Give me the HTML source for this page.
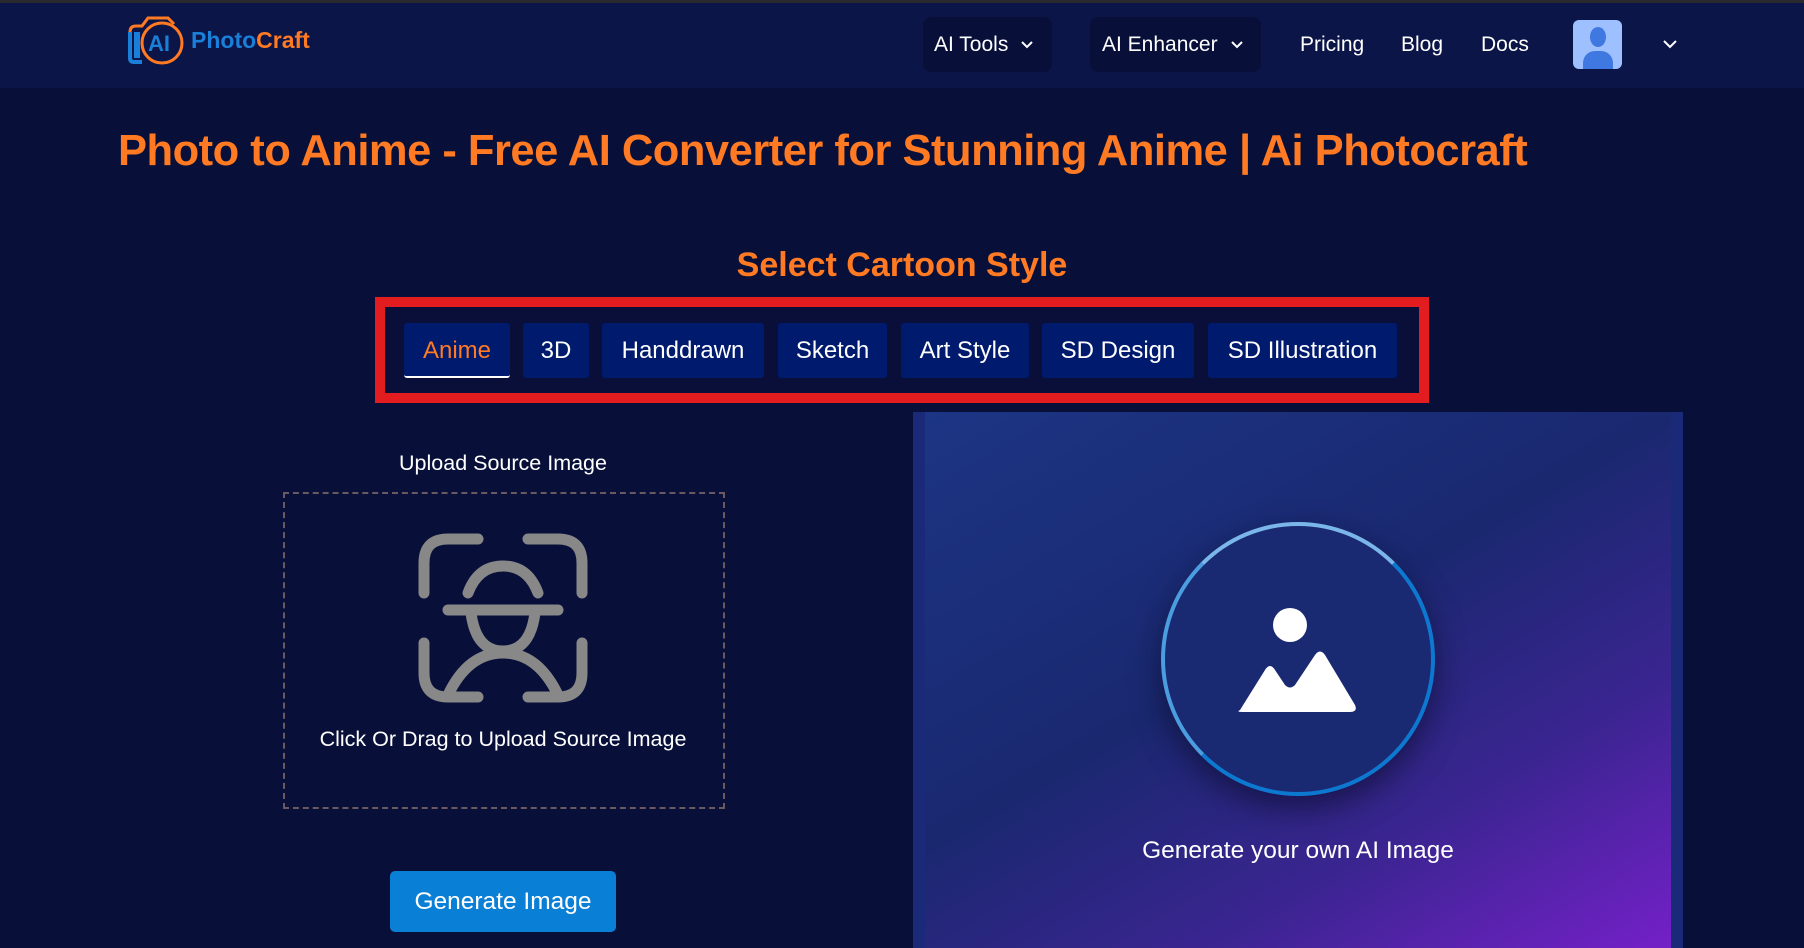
<!DOCTYPE html>
<html><head><meta charset="utf-8"><style>
*{margin:0;padding:0;box-sizing:border-box}
body{width:1804px;height:948px;background:#08103a;font-family:"Liberation Sans",Arial,sans-serif;position:relative;overflow:hidden;color:#fff}
.hdr{position:absolute;left:0;top:0;width:1804px;height:88px;background:#0c1547;border-top:3px solid #2a2a2e}
.abs{position:absolute}
.nav{font-size:21px;color:#fff;white-space:nowrap}
.dd{background:#08103a;border-radius:8px}
.title{left:118px;top:127px;font-size:43.5px;font-weight:bold;color:#ff7a22;white-space:nowrap;letter-spacing:-0.5px}
.sub{left:0;width:1804px;top:246px;text-align:center;font-size:34px;font-weight:bold;color:#ff7a22}
.red{left:375px;top:297px;width:1054px;height:106px;border:10px solid #e31c1f;background:#0a0f3a}
.tab{position:absolute;top:323px;height:55px;background:#001a6e;border-radius:3px;font-size:24px;line-height:55px;text-align:center;color:#fff}
</style></head><body>
<div class="hdr"></div>
<svg class="abs" style="left:126px;top:10px" width="60" height="58" viewBox="0 0 60 58">
<path d="M4 22 L4 48 Q4 52 8 52 L16 52" stroke="#1a7fd8" stroke-width="4" fill="none"/>
<path d="M4 22 Q4 16 10 16 L16 16 L22 8 L42 8 L48 14" stroke="#ff7a22" stroke-width="3" fill="none"/>
<rect x="8" y="22" width="6" height="26" fill="#1a7fd8"/>
<circle cx="36" cy="33" r="20" stroke="#ff7a22" stroke-width="3" fill="none"/>
<text x="22" y="41" font-family="Liberation Sans" font-weight="bold" font-size="22" fill="#1a7fd8">AI</text>
</svg>
<div class="abs" style="left:191px;top:27px;font-size:23px;font-weight:bold;white-space:nowrap"><span style="color:#1a7fd8">Photo</span><span style="color:#ff7a22">Craft</span></div>

<div class="abs dd" style="left:923px;top:17px;width:129px;height:55px"></div>
<div class="abs nav" style="left:934px;top:33px">AI Tools</div>
<svg class="abs" style="left:1020px;top:40px" width="14" height="10"><path d="M2 2 L7 7 L12 2" stroke="#fff" stroke-width="2" fill="none"/></svg>
<div class="abs dd" style="left:1090px;top:17px;width:171px;height:55px"></div>
<div class="abs nav" style="left:1102px;top:33px">AI Enhancer</div>
<svg class="abs" style="left:1230px;top:40px" width="14" height="10"><path d="M2 2 L7 7 L12 2" stroke="#fff" stroke-width="2" fill="none"/></svg>
<div class="abs nav" style="left:1300px;top:33px">Pricing</div>
<div class="abs nav" style="left:1401px;top:33px">Blog</div>
<div class="abs nav" style="left:1481px;top:33px">Docs</div>
<div class="abs" style="left:1573px;top:20px;width:49px;height:49px;background:#9ec0ff;border-radius:6px;overflow:hidden">
<div class="abs" style="left:17px;top:7px;width:16px;height:20px;border-radius:50%;background:#3f78e0"></div>
<div class="abs" style="left:10px;top:31px;width:30px;height:24px;border-radius:12px 12px 0 0;background:#3f78e0"></div>
</div>
<svg class="abs" style="left:1662px;top:38px" width="16" height="12"><path d="M2 3 L8 9 L14 3" stroke="#fff" stroke-width="2" fill="none"/></svg>

<div class="abs title">Photo to Anime - Free AI Converter for Stunning Anime | Ai Photocraft</div>
<div class="abs sub">Select Cartoon Style</div>
<div class="abs red"></div>
<div class="tab" style="left:404px;width:106px;color:#ff7a22;border-bottom:2px solid #fff">Anime</div>
<div class="tab" style="left:523px;width:66px">3D</div>
<div class="tab" style="left:602px;width:162px">Handdrawn</div>
<div class="tab" style="left:778px;width:109px">Sketch</div>
<div class="tab" style="left:901px;width:128px">Art Style</div>
<div class="tab" style="left:1042px;width:152px">SD Design</div>
<div class="tab" style="left:1208px;width:189px">SD Illustration</div>

<div class="abs" style="left:283px;width:440px;top:451px;text-align:center;font-size:21.5px">Upload Source Image</div>
<div class="abs" style="left:283px;top:492px;width:442px;height:317px;border:2px dashed #6a5a60"></div>
<svg class="abs" style="left:418px;top:533px" width="170" height="170" viewBox="0 0 170 170" fill="none" stroke="#888" stroke-width="11" stroke-linecap="round">
<path d="M60 6 L30 6 Q6 6 6 30 L6 60"/>
<path d="M110 6 L140 6 Q164 6 164 30 L164 60"/>
<path d="M6 110 L6 140 Q6 164 30 164 L60 164"/>
<path d="M164 110 L164 140 Q164 164 140 164 L110 164"/>
<path d="M50 60 Q60 33 85 33 Q110 33 120 60"/>
<path d="M30 77 L140 77"/>
<path d="M53 80 Q58 118 85 118 Q112 118 117 80"/>
<path d="M30 162 Q50 120 85 120 Q120 120 140 162"/>
</svg>
<div class="abs" style="left:283px;width:440px;top:727px;text-align:center;font-size:21.5px">Click Or Drag to Upload Source Image</div>
<div class="abs" style="left:390px;top:871px;width:226px;height:61px;background:#0a7fd6;border-radius:5px;text-align:center;line-height:61px;font-size:24.5px">Generate Image</div>

<div class="abs" style="left:913px;top:412px;width:770px;height:536px;background:#1b2a78"></div>
<div class="abs" style="left:925px;top:412px;width:746px;height:536px;background:linear-gradient(150deg,#1c3584 0%,#1a2870 45%,#3a2590 72%,#7420c8 100%)"></div>
<div class="abs" style="left:1161px;top:522px;width:274px;height:274px;border-radius:50%;background:#1a2a72;border:4px solid #0d78d0;border-top-color:#7bb6ea;border-left-color:#4a9ee0;box-shadow:0 12px 30px rgba(10,10,40,0.6)"></div>
<svg class="abs" style="left:1230px;top:600px" width="140" height="120" viewBox="0 0 140 120">
<circle cx="60" cy="25" r="17" fill="#fff"/>
<path d="M10 110 L35 70 Q40 62 45 70 L55 85 Q60 90 65 85 L85 55 Q90 48 95 55 L125 105 Q128 112 120 112 L12 112 Q6 112 10 110Z" fill="#fff"/>
</svg>
<div class="abs" style="left:913px;width:770px;top:837px;text-align:center;font-size:24.5px">Generate your own AI Image</div>
</body></html>
